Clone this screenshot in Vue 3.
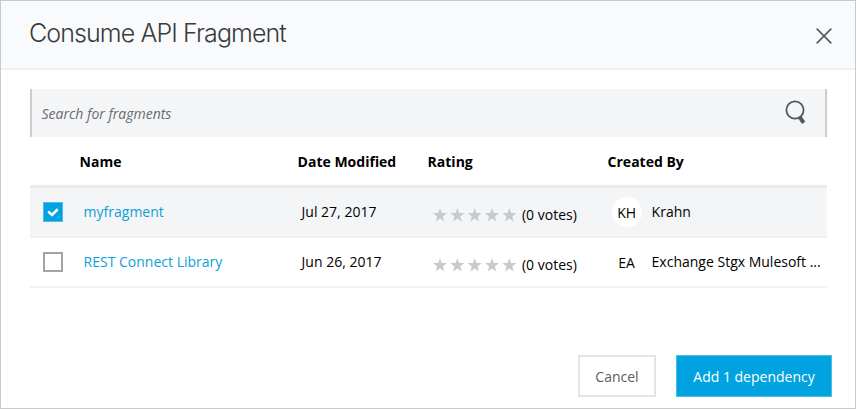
<script setup>
const rows = [
  { name: 'myfragment', date: 'Jul 27, 2017', initials: 'KH', author: 'Krahn', checked: true },
  { name: 'REST Connect Library', date: 'Jun 26, 2017', initials: 'EA', author: 'Exchange Stgx Mulesoft ...', checked: false },
]
const starPitch = 17.35
</script>

<template>
  <div class="dialog">
    <header class="header">
      <h1 class="title">Consume API Fragment</h1>
      <svg class="close" width="16" height="16" viewBox="0 0 16 16">
        <path d="M0.7 0.7L15.3 15.3M15.3 0.7L0.7 15.3" fill="none" stroke="#5c5d5f" stroke-width="1.7" />
      </svg>
    </header>

    <main class="content">
      <div class="search">
        <span class="placeholder">Search for fragments</span>
        <svg class="lens" width="22" height="26" viewBox="0 0 22 26">
          <circle cx="10" cy="10" r="8.6" fill="none" stroke="#55565a" stroke-width="1.8" />
          <path d="M14.7 17.2L18.7 22.8" fill="none" stroke="#55565a" stroke-width="4" />
        </svg>
      </div>

      <div class="grid head">
        <span></span>
        <span>Name</span>
        <span>Date Modified</span>
        <span>Rating</span>
        <span>Created By</span>
      </div>

      <div v-for="row in rows" :key="row.name" class="grid row" :class="{ selected: row.checked }">
        <span class="box">
          <svg v-if="row.checked" width="12" height="9" viewBox="0 0 12 9">
            <path d="M1.2 3.5L5 6.9L10.7 1.3" fill="none" stroke="#fff" stroke-width="2.7" />
          </svg>
        </span>
        <a class="link">{{ row.name }}</a>
        <span class="date">{{ row.date }}</span>
        <span class="rating">
          <svg class="stars" width="84" height="14" viewBox="0 0 84 14">
            <path
              v-for="n in 5"
              :key="n"
              :transform="`translate(${(n - 1) * starPitch} 0)`"
              d="M7 0L8.8 4.9L14 5.1L9.9 8.4L11.3 13.6L7 10.6L2.7 13.6L4.1 8.4L0 5.1L5.2 4.9Z"
              fill="#c9cacc"
            />
          </svg>
          <span class="votes">(0 votes)</span>
        </span>
        <span class="creator">
          <span class="avatar">{{ row.initials }}</span>
          <span class="author">{{ row.author }}</span>
        </span>
      </div>
    </main>

    <footer class="footer">
      <button class="btn cancel">Cancel</button>
      <button class="btn add">Add 1 dependency</button>
    </footer>
  </div>
</template>

<style>
body {
  background: #fff;
}
</style>

<style scoped>
.dialog {
  box-sizing: border-box;
  width: 856px;
  height: 409px;
  display: flex;
  flex-direction: column;
  border: 1px solid #c9cacc;
  background: #fff;
  color: #000;
  font: 14px/20px "Open Sans", sans-serif;
  white-space: nowrap;
}
.header {
  box-sizing: border-box;
  height: 69px;
  display: flex;
  align-items: flex-start;
  justify-content: space-between;
  padding: 16px 23px 0 28px;
  background: #f9fafc;
  border-bottom: 2px solid #eff0f2;
}
.title {
  margin: 0;
  font: 300 25px/32px Inter, sans-serif;
  letter-spacing: -0.9px;
  color: #3a3b3c;
}
.close {
  margin-top: 11px;
}
.content {
  padding: 19px 28px 0 29px;
}
.search {
  box-sizing: border-box;
  height: 48px;
  display: flex;
  align-items: center;
  justify-content: space-between;
  padding: 0 18px 0 9.5px;
  background: #f4f5f7;
  border: solid #caccce;
  border-width: 0 2px;
}
.placeholder {
  padding-top: 1px;
  font-style: italic;
  color: #6a6b6d;
}
.lens {
  margin-top: -1px;
}
.grid {
  box-sizing: border-box;
  display: grid;
  grid-template-columns: 49.6px 218px 130px 180px 1fr;
}
.head {
  height: 51px;
  padding-top: 15px;
  font-weight: 700;
  border-bottom: 3px solid #e8e9ea;
}
.row {
  height: 50px;
  align-items: center;
  border-bottom: 2px solid #f1f2f3;
}
.row.selected {
  background: #f4f5f7;
  border-color: #eeeff0;
}
.box {
  box-sizing: border-box;
  width: 20px;
  height: 20px;
  margin-left: 13px;
  display: flex;
  align-items: center;
  justify-content: center;
  border: 2px solid #a2a3a4;
  background: #fff;
}
.selected .box {
  background: #00a2df;
  border: 1px solid #4dbde8;
}
.link {
  padding-left: 4px;
  color: #0c9fda;
}
.date {
  padding-left: 4px;
}
.rating {
  display: flex;
  align-items: center;
  padding: 6px 0 0 5.4px;
}
.votes {
  padding-left: 5px;
}
.creator {
  display: flex;
  align-items: center;
  padding-left: 4px;
}
.avatar {
  width: 30px;
  height: 30px;
  border-radius: 50%;
  background: #fff;
  line-height: 31px;
  text-align: center;
}
.author {
  padding-left: 10px;
}
.footer {
  display: flex;
  justify-content: flex-end;
  gap: 20px;
  margin-top: auto;
  padding: 0 23px 11px 0;
}
.btn {
  box-sizing: border-box;
  height: 42px;
  padding: 1px 0 0;
  font: 14px/20px "Open Sans", sans-serif;
}
.cancel {
  width: 78px;
  border: 2px solid #e4e5e6;
  background: #fff;
  color: #5c5d5f;
}
.add {
  width: 156px;
  border: 1px solid #4dbde8;
  background: #00a2df;
  color: #fff;
}
</style>
